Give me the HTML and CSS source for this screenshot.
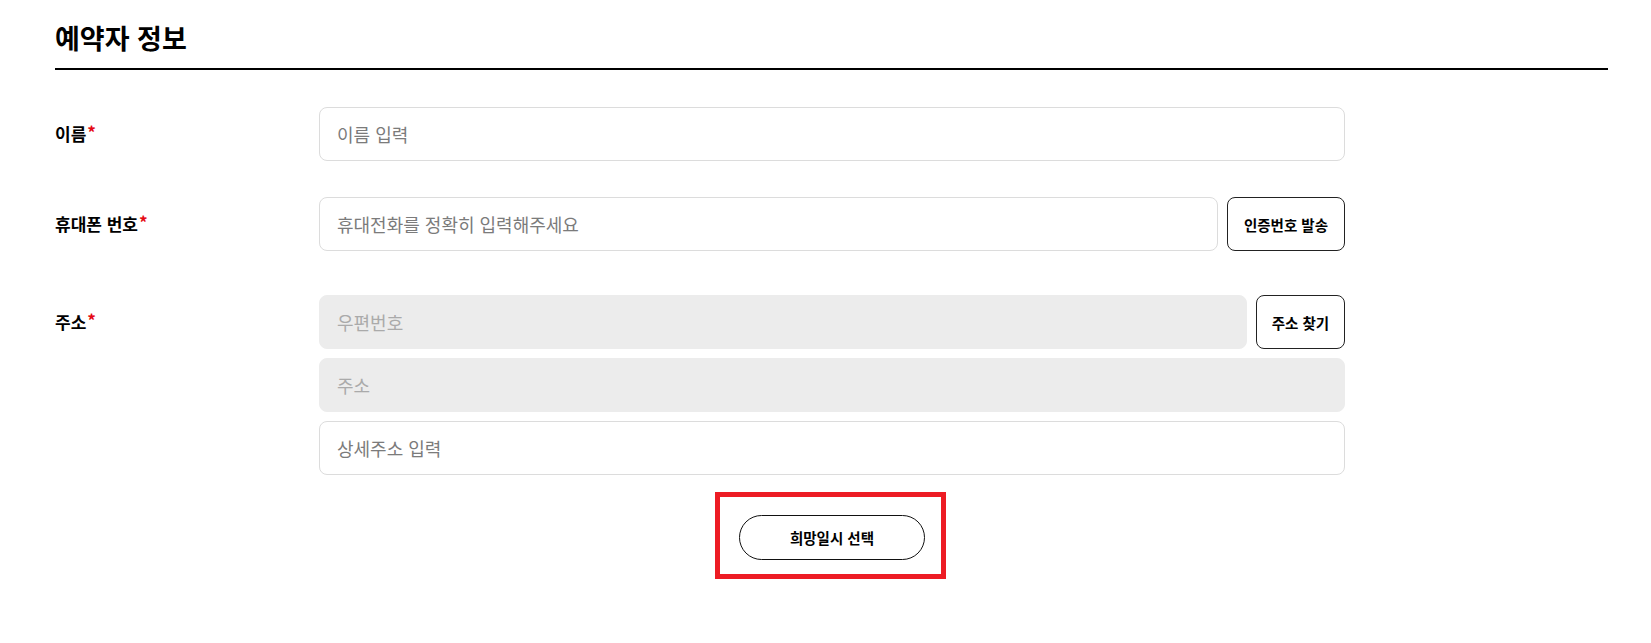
FILE: index.html
```html
<!DOCTYPE html>
<html lang="ko">
<head>
<meta charset="utf-8">
<title>예약자 정보</title>
<link rel="stylesheet" href="styles.css">
</head>
<body>
<section class="section">
  <h2 class="title">예약자 정보</h2>
  <div class="form">
    <div class="row row-name">
      <div class="label">이름<span class="req">*</span></div>
      <div class="field">
        <input class="input" type="text" placeholder="이름 입력">
      </div>
    </div>
    <div class="row row-phone">
      <div class="label">휴대폰 번호<span class="req">*</span></div>
      <div class="field">
        <div class="line">
          <input class="input grow" type="text" placeholder="휴대전화를 정확히 입력해주세요">
          <button class="btn btn-cert" type="button">인증번호 발송</button>
        </div>
      </div>
    </div>
    <div class="row row-addr">
      <div class="label">주소<span class="req">*</span></div>
      <div class="field stack">
        <div class="line">
          <input class="input grow disabled" type="text" placeholder="우편번호" disabled>
          <button class="btn btn-zip" type="button">주소 찾기</button>
        </div>
        <input class="input disabled" type="text" placeholder="주소" disabled>
        <input class="input" type="text" placeholder="상세주소 입력">
      </div>
    </div>
    <div class="actions">
      <div class="highlight">
        <button class="pill" type="button">희망일시 선택</button>
      </div>
    </div>
  </div>
</section>
</body>
</html>
```

FILE: styles.css
```css
* { box-sizing: border-box; }
html, body { margin: 0; padding: 0; background: #fff; }
body {
  font-family: "Noto Sans CJK KR", "Noto Sans", sans-serif;
  color: #000;
  width: 1651px;
  height: 643px;
  overflow: hidden;
}
.section {
  margin-left: 55px;
  width: 1553px;
}
.title {
  margin: 0;
  padding-top: 18px;
  padding-bottom: 10px;
  font-size: 27px;
  line-height: 40px;
  font-weight: 700;
  border-bottom: 2px solid #000;
}
.form {
  padding-top: 37px;
}
.row {
  display: flex;
  align-items: flex-start;
}
.row-phone { margin-top: 36px; }
.row-addr { margin-top: 44px; }
.label {
  width: 264px;
  flex: none;
  font-size: 17px;
  font-weight: 700;
  line-height: 54px;
}
.req {
  color: #e50914;
  margin-left: 1px;
  position: relative;
  top: -2px;
}
.field {
  width: 1026px;
  flex: none;
}
.stack {
  display: flex;
  flex-direction: column;
  gap: 9px;
}
.line {
  display: flex;
  gap: 9px;
}
.input {
  display: block;
  width: 100%;
  height: 54px;
  border: 1px solid #dcdcdc;
  border-radius: 8px;
  padding: 0 17px;
  font-family: inherit;
  font-size: 18px;
  color: #333;
  background: #fff;
  outline: none;
}
.input.grow { flex: 1; width: auto; min-width: 0; }
.input::placeholder { color: #7b7b7b; }
.input.disabled {
  background: #ececec;
  border-color: #ececec;
}
.input.disabled::placeholder { color: #aaaaaa; }
.btn {
  flex: none;
  height: 54px;
  border: 1px solid #222;
  border-radius: 8px;
  background: #fff;
  font-family: inherit;
  font-size: 14.5px;
  font-weight: 700;
  color: #000;
  padding: 0;
}
.btn-cert { width: 118px; }
.btn-zip { width: 89px; }
.actions {
  display: flex;
  justify-content: center;
  padding-left: 264px;
  width: 1290px;
  margin-top: 17px;
}
.highlight {
  border: 5px solid #ed1c24;
  padding: 18px 16px 14px 19px;
  margin-left: -3px;
}
.pill {
  display: block;
  width: 186px;
  height: 45px;
  border: 1px solid #111;
  border-radius: 23px;
  background: #fff;
  font-family: inherit;
  font-size: 14.5px;
  font-weight: 700;
  color: #000;
}
```
